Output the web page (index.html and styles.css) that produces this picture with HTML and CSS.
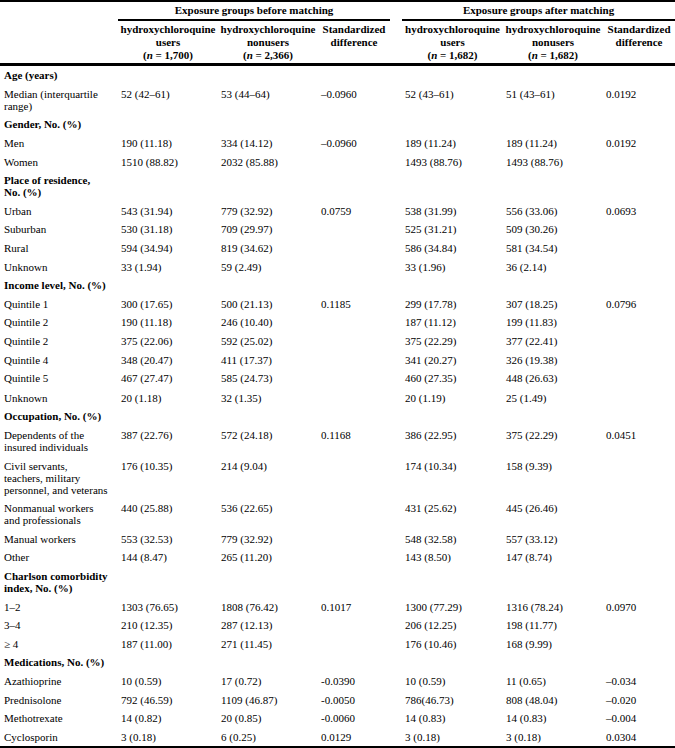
FILE: index.html
```html
<!DOCTYPE html>
<html>
<head>
<meta charset="utf-8">
<link rel="stylesheet" href="styles.css">
</head>
<body>
<table class="tbl">
<colgroup>
<col class="c-label"><col class="c-num"><col class="c-num"><col class="c-sd"><col class="c-gap"><col class="c-num2"><col class="c-num"><col class="c-sd">
</colgroup>
<thead>
<tr class="grp">
<th></th>
<th colspan="3" class="grp-cell">Exposure groups before matching</th>
<th class="gap"></th>
<th colspan="3" class="grp-cell">Exposure groups after matching</th>
</tr>
<tr class="cols">
<th></th>
<th>hydroxychloroquine<br>users<br>(<i>n</i> = 1,700)</th>
<th>hydroxychloroquine<br>nonusers<br>(<i>n</i> = 2,366)</th>
<th>Standardized<br>difference</th>
<th class="gap"></th>
<th>hydroxychloroquine<br>users<br>(<i>n</i> = 1,682)</th>
<th>hydroxychloroquine<br>nonusers<br>(<i>n</i> = 1,682)</th>
<th>Standardized<br>difference</th>
</tr>
</thead>
<tbody>
<tr><td class="sec">Age (years)</td><td></td><td></td><td></td><td class="gap"></td><td></td><td></td><td></td></tr>
<tr><td class="lbl">Median (interquartile<br>range)</td><td>52 (42–61)</td><td>53 (44–64)</td><td>–0.0960</td><td class="gap"></td><td>52 (43–61)</td><td>51 (43–61)</td><td>0.0192</td></tr>
<tr><td class="sec">Gender, No. (%)</td><td></td><td></td><td></td><td class="gap"></td><td></td><td></td><td></td></tr>
<tr><td class="lbl">Men</td><td>190 (11.18)</td><td>334 (14.12)</td><td>–0.0960</td><td class="gap"></td><td>189 (11.24)</td><td>189 (11.24)</td><td>0.0192</td></tr>
<tr><td class="lbl">Women</td><td>1510 (88.82)</td><td>2032 (85.88)</td><td></td><td class="gap"></td><td>1493 (88.76)</td><td>1493 (88.76)</td><td></td></tr>
<tr><td class="sec">Place of residence,<br>No. (%)</td><td></td><td></td><td></td><td class="gap"></td><td></td><td></td><td></td></tr>
<tr><td class="lbl">Urban</td><td>543 (31.94)</td><td>779 (32.92)</td><td>0.0759</td><td class="gap"></td><td>538 (31.99)</td><td>556 (33.06)</td><td>0.0693</td></tr>
<tr><td class="lbl">Suburban</td><td>530 (31.18)</td><td>709 (29.97)</td><td></td><td class="gap"></td><td>525 (31.21)</td><td>509 (30.26)</td><td></td></tr>
<tr><td class="lbl">Rural</td><td>594 (34.94)</td><td>819 (34.62)</td><td></td><td class="gap"></td><td>586 (34.84)</td><td>581 (34.54)</td><td></td></tr>
<tr><td class="lbl">Unknown</td><td>33 (1.94)</td><td>59 (2.49)</td><td></td><td class="gap"></td><td>33 (1.96)</td><td>36 (2.14)</td><td></td></tr>
<tr><td class="sec">Income level, No. (%)</td><td></td><td></td><td></td><td class="gap"></td><td></td><td></td><td></td></tr>
<tr><td class="lbl">Quintile 1</td><td>300 (17.65)</td><td>500 (21.13)</td><td>0.1185</td><td class="gap"></td><td>299 (17.78)</td><td>307 (18.25)</td><td>0.0796</td></tr>
<tr><td class="lbl">Quintile 2</td><td>190 (11.18)</td><td>246 (10.40)</td><td></td><td class="gap"></td><td>187 (11.12)</td><td>199 (11.83)</td><td></td></tr>
<tr><td class="lbl">Quintile 2</td><td>375 (22.06)</td><td>592 (25.02)</td><td></td><td class="gap"></td><td>375 (22.29)</td><td>377 (22.41)</td><td></td></tr>
<tr><td class="lbl">Quintile 4</td><td>348 (20.47)</td><td>411 (17.37)</td><td></td><td class="gap"></td><td>341 (20.27)</td><td>326 (19.38)</td><td></td></tr>
<tr><td class="lbl">Quintile 5</td><td>467 (27.47)</td><td>585 (24.73)</td><td></td><td class="gap"></td><td>460 (27.35)</td><td>448 (26.63)</td><td></td></tr>
<tr class="tall"><td class="lbl">Unknown</td><td>20 (1.18)</td><td>32 (1.35)</td><td></td><td class="gap"></td><td>20 (1.19)</td><td>25 (1.49)</td><td></td></tr>
<tr><td class="sec">Occupation, No. (%)</td><td></td><td></td><td></td><td class="gap"></td><td></td><td></td><td></td></tr>
<tr><td class="lbl">Dependents of the<br>insured individuals</td><td>387 (22.76)</td><td>572 (24.18)</td><td>0.1168</td><td class="gap"></td><td>386 (22.95)</td><td>375 (22.29)</td><td>0.0451</td></tr>
<tr><td class="lbl">Civil servants,<br>teachers, military<br>personnel, and veterans</td><td>176 (10.35)</td><td>214 (9.04)</td><td></td><td class="gap"></td><td>174 (10.34)</td><td>158 (9.39)</td><td></td></tr>
<tr><td class="lbl">Nonmanual workers<br>and professionals</td><td>440 (25.88)</td><td>536 (22.65)</td><td></td><td class="gap"></td><td>431 (25.62)</td><td>445 (26.46)</td><td></td></tr>
<tr><td class="lbl">Manual workers</td><td>553 (32.53)</td><td>779 (32.92)</td><td></td><td class="gap"></td><td>548 (32.58)</td><td>557 (33.12)</td><td></td></tr>
<tr><td class="lbl">Other</td><td>144 (8.47)</td><td>265 (11.20)</td><td></td><td class="gap"></td><td>143 (8.50)</td><td>147 (8.74)</td><td></td></tr>
<tr><td class="sec">Charlson comorbidity<br>index, No. (%)</td><td></td><td></td><td></td><td class="gap"></td><td></td><td></td><td></td></tr>
<tr><td class="lbl">1–2</td><td>1303 (76.65)</td><td>1808 (76.42)</td><td>0.1017</td><td class="gap"></td><td>1300 (77.29)</td><td>1316 (78.24)</td><td>0.0970</td></tr>
<tr><td class="lbl">3–4</td><td>210 (12.35)</td><td>287 (12.13)</td><td></td><td class="gap"></td><td>206 (12.25)</td><td>198 (11.77)</td><td></td></tr>
<tr><td class="lbl">≥ 4</td><td>187 (11.00)</td><td>271 (11.45)</td><td></td><td class="gap"></td><td>176 (10.46)</td><td>168 (9.99)</td><td></td></tr>
<tr><td class="sec">Medications, No. (%)</td><td></td><td></td><td></td><td class="gap"></td><td></td><td></td><td></td></tr>
<tr><td class="lbl">Azathioprine</td><td>10 (0.59)</td><td>17 (0.72)</td><td>-0.0390</td><td class="gap"></td><td>10 (0.59)</td><td>11 (0.65)</td><td>–0.034</td></tr>
<tr><td class="lbl">Prednisolone</td><td>792 (46.59)</td><td>1109 (46.87)</td><td>-0.0050</td><td class="gap"></td><td>786(46.73)</td><td>808 (48.04)</td><td>–0.020</td></tr>
<tr><td class="lbl">Methotrexate</td><td>14 (0.82)</td><td>20 (0.85)</td><td>-0.0060</td><td class="gap"></td><td>14 (0.83)</td><td>14 (0.83)</td><td>–0.004</td></tr>
<tr class="last"><td class="lbl">Cyclosporin</td><td>3 (0.18)</td><td>6 (0.25)</td><td>0.0129</td><td class="gap"></td><td>3 (0.18)</td><td>3 (0.18)</td><td>0.0304</td></tr>
</tbody>
</table>
</body>
</html>
```
FILE: styles.css
```css
html, body {
  margin: 0;
  padding: 0;
  background: #ffffff;
}
body, .tbl, .tbl th, .tbl td {
  font-family: "Liberation Serif", "Times New Roman", Times, serif;
  font-size: 11px;
  color: #000000;
}
.tbl {
  width: 675px;
  table-layout: fixed;
  border-collapse: separate;
  border-spacing: 0;
  border-top: 2px solid #000;
}
.c-label { width: 118px; }
.c-num { width: 100px; }
.c-num2 { width: 101px; }
.c-sd { width: 72px; }
.c-gap { width: 12px; }

.tbl th {
  font-weight: bold;
  text-align: center;
  vertical-align: top;
  padding: 0;
  line-height: 13px;
}
.grp th {
  padding: 2px 0 2px;
  height: 13px;
}
.grp .grp-cell {
  border-bottom: 2px solid #000;
}
.cols th {
  padding: 2px 0 1px;
  border-bottom: 3px solid #000;
}
.tbl td {
  vertical-align: top;
  text-align: left;
  padding: 3.3px 3px;
  line-height: 12px;
  white-space: nowrap;
}
.tbl td.lbl, .tbl td.sec {
  padding-left: 4px;
}
.tbl td.sec {
  font-weight: bold;
}
.tbl td.gap {
  padding: 0;
}
.tbl tr.tall td {
  padding-top: 4.3px;
  padding-bottom: 3.3px;
}
.tbl tr.last td {
  border-bottom: 2px solid #000;
}
```
